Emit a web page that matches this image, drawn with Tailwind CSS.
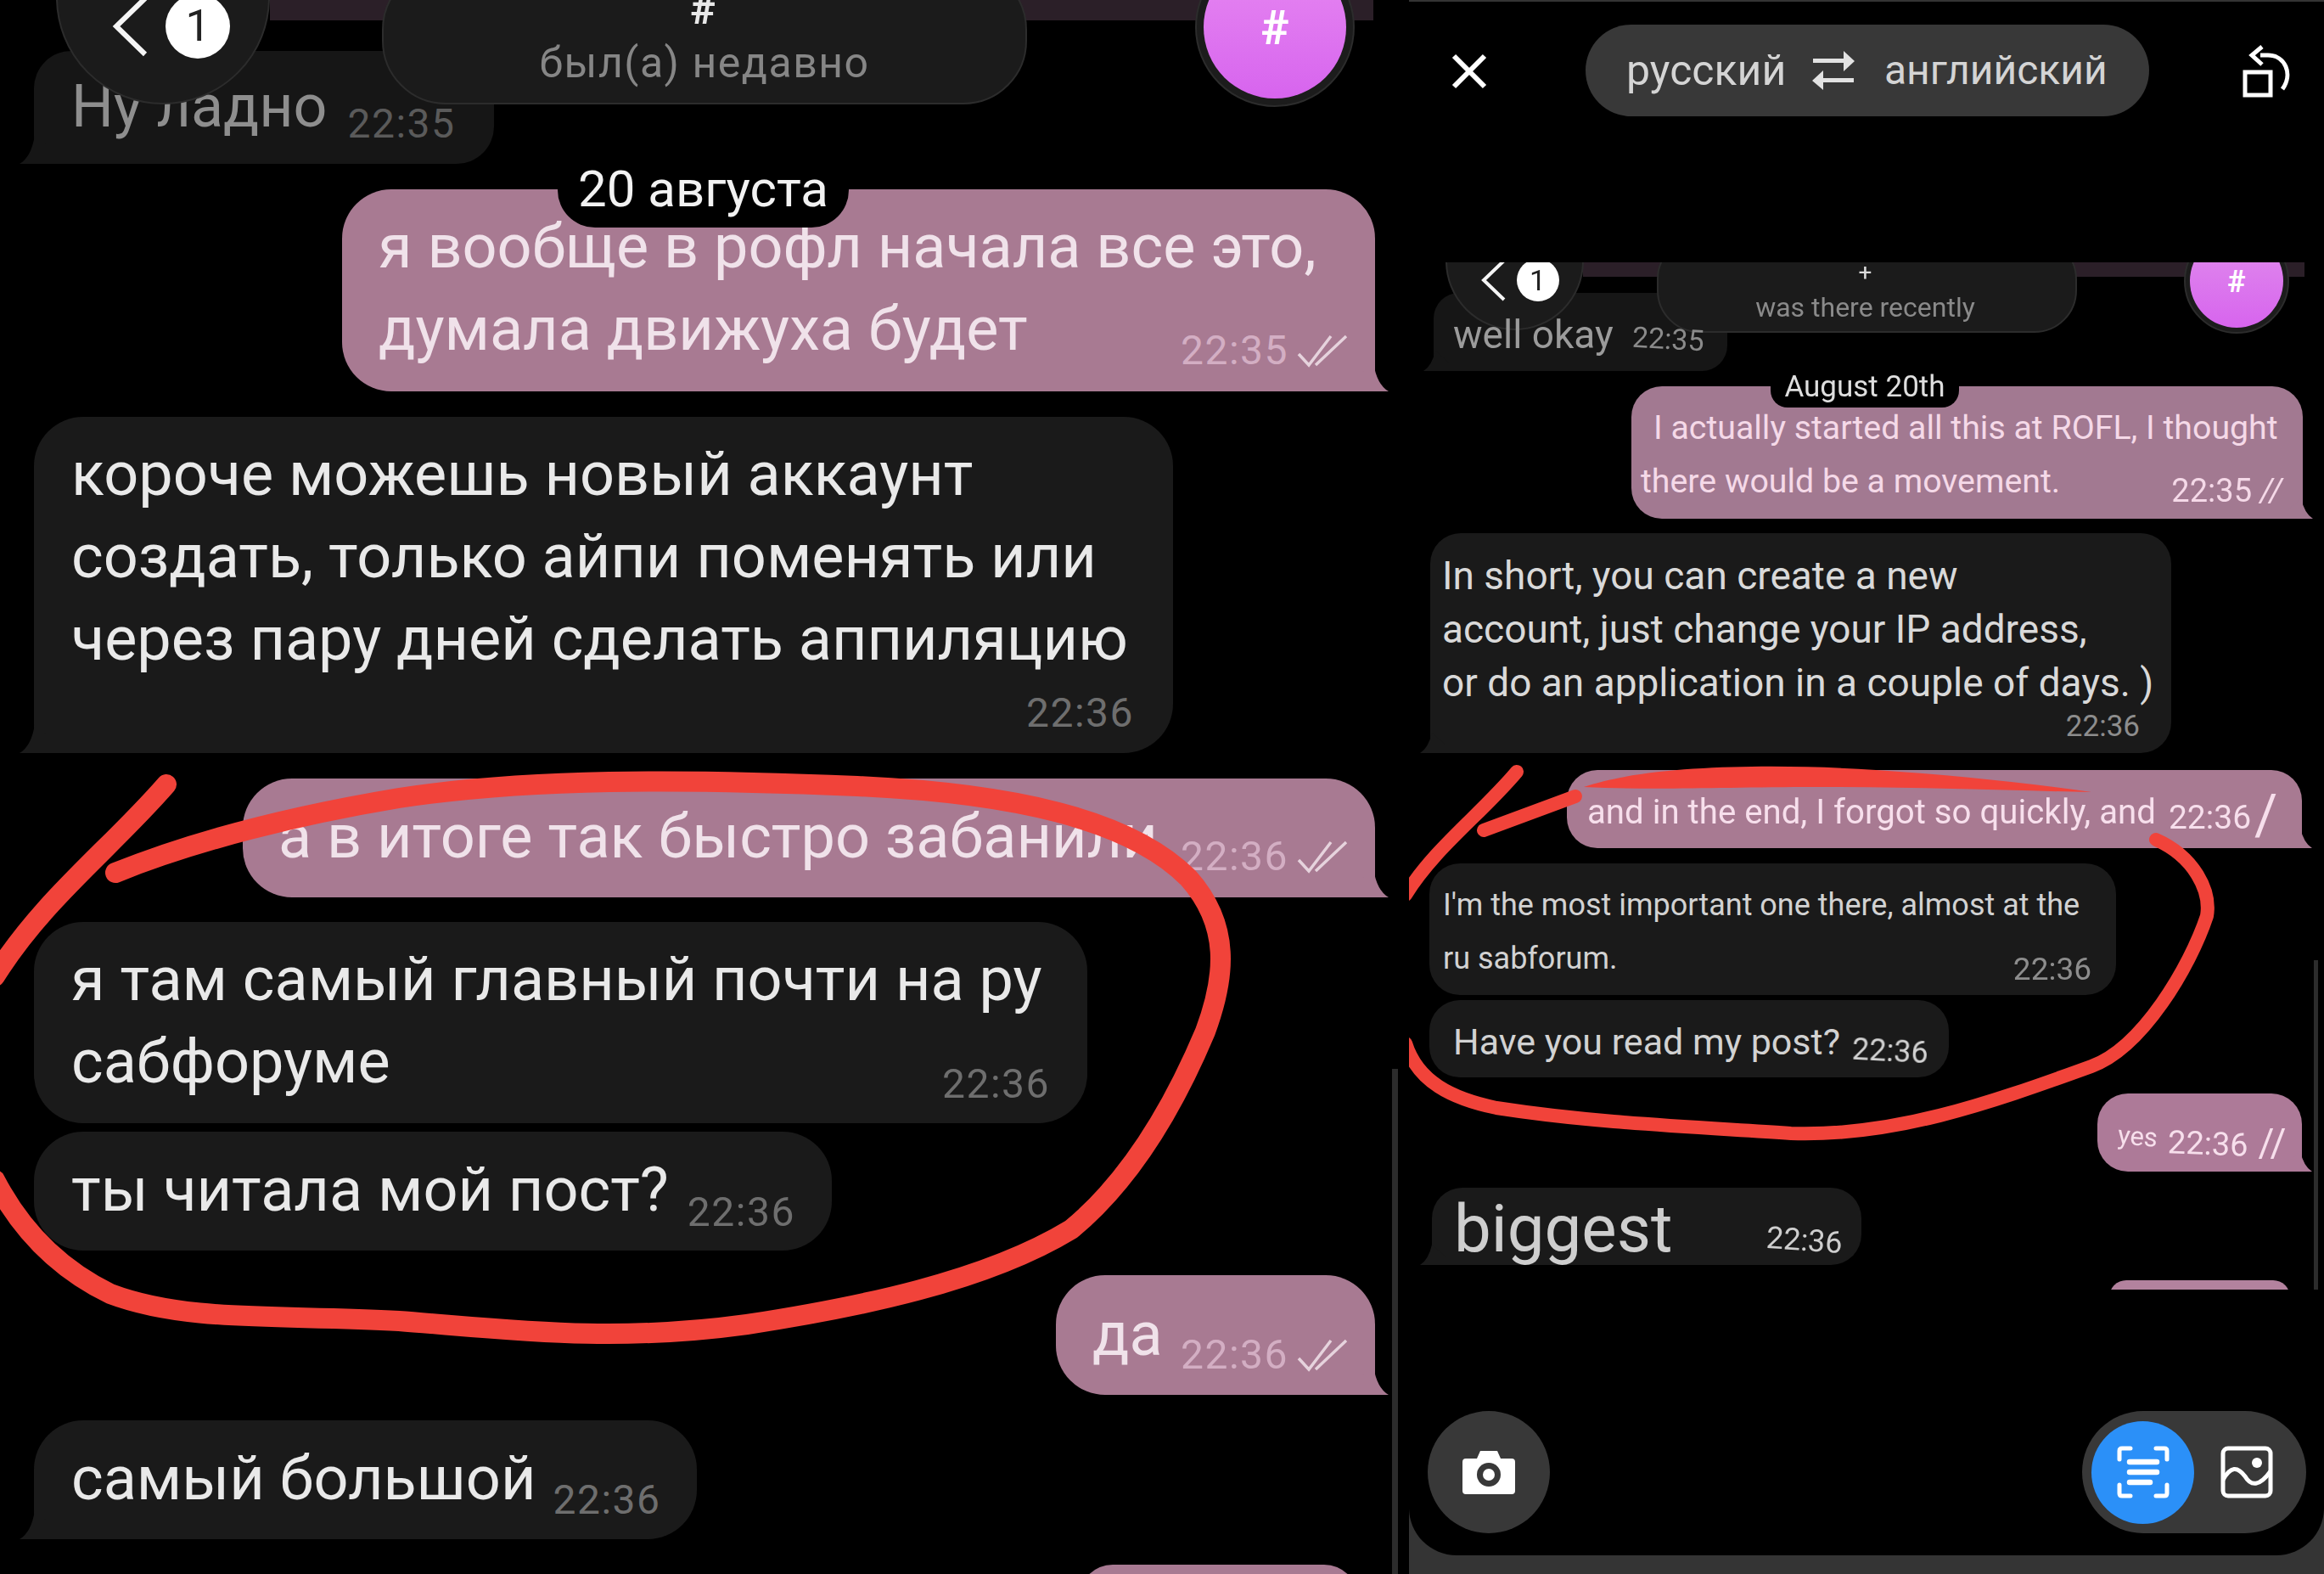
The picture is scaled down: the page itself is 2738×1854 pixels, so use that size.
<!doctype html>
<html lang="ru"><head><meta charset="utf-8">
<script src="https://cdn.jsdelivr.net/npm/@tailwindcss/browser@4"></script>
</head>
<body class="bg-black [font-family:Roboto,sans-serif]">
<main class="flex w-[2738px] h-[1854px] overflow-hidden bg-black">

<!-- LEFT SCREENSHOT -->
<section class="relative w-[1660px] h-[1854px] overflow-hidden flex flex-col blur-[0.7px] [&>*]:shrink-0">
  <div class="relative ml-[40px] mt-[60px] w-[542px] h-[133px] rounded-[44px] rounded-bl-none bg-[#161616] pl-[44px] pt-[27px] flex items-start text-[#8e8e8e]">
    <svg class="absolute left-[-17px] bottom-0" width="40" height="34" viewBox="0 0 40 34"><path d="M0 34 Q14 26 18 0 L40 20 V34Z" fill="#161616"/></svg>
    <span class="text-[70px] leading-[76px]">Ну ладно</span><span class="ml-[24px] mt-[32px] text-[48px] leading-[54px] tracking-[1.5px] text-[#5a5a5a]">22:35</span>
  </div>

  <div class="relative self-end mr-[40px] mt-[30px] w-[1217px] h-[238px] rounded-[58px] rounded-br-none bg-[#a87a92] pl-[43px] pt-[19px] text-[#f0e2ea]">
    <svg class="absolute right-[-16px] bottom-0" width="40" height="34" viewBox="0 0 40 34"><path d="M40 34 Q26 26 22 0 L0 20 V34Z" fill="#a87a92"/></svg>
    <p class="text-[72px] leading-[97px] whitespace-pre-line">я вообще в рофл начала все это,
думала движуха будет</p>
    <div class="absolute right-[30px] bottom-[21px] flex items-center gap-[10px] text-[#d3aec3]"><span class="text-[48px] leading-[54px] tracking-[1.5px]">22:35</span><svg width="62" height="40" viewBox="0 0 62 40" fill="none" stroke="#e6d3dd" stroke-width="3.5"><path d="M2 24 L14 37 L40 3M22 37 L58 3"/></svg></div>
  </div>

  <div class="relative ml-[40px] mt-[30px] w-[1342px] h-[396px] rounded-[58px] rounded-bl-none bg-[#1a1a1a] pl-[44px] pt-[19px] text-[#e9e9e9]">
    <svg class="absolute left-[-17px] bottom-0" width="40" height="34" viewBox="0 0 40 34"><path d="M0 34 Q14 26 18 0 L40 20 V34Z" fill="#1a1a1a"/></svg>
    <p class="text-[72px] leading-[97px] whitespace-pre-line">короче можешь новый аккаунт
создать, только айпи поменять или
через пару дней сделать аппиляцию</p>
    <span class="absolute right-[46px] bottom-[20px] text-[48px] leading-[54px] tracking-[1.5px] text-[#6e6e6e]">22:36</span>
  </div>

  <div class="relative self-end mr-[40px] mt-[30px] w-[1334px] h-[140px] rounded-[58px] rounded-br-none bg-[#a87a92] pl-[42px] pt-[20px] text-[#f0e2ea]">
    <svg class="absolute right-[-16px] bottom-0" width="40" height="34" viewBox="0 0 40 34"><path d="M40 34 Q26 26 22 0 L0 20 V34Z" fill="#a87a92"/></svg>
    <p class="text-[72px] leading-[97px]">а в итоге так быстро забанили</p>
    <div class="absolute right-[30px] bottom-[21px] flex items-center gap-[10px] text-[#d3aec3]"><span class="text-[48px] leading-[54px] tracking-[1.5px]">22:36</span><svg width="62" height="40" viewBox="0 0 62 40" fill="none" stroke="#e6d3dd" stroke-width="3.5"><path d="M2 24 L14 37 L40 3M22 37 L58 3"/></svg></div>
  </div>

  <div class="relative ml-[40px] mt-[29px] w-[1241px] h-[237px] rounded-[58px] bg-[#1a1a1a] pl-[44px] pt-[19px] text-[#e9e9e9]">
    <p class="text-[72px] leading-[97px] whitespace-pre-line">я там самый главный почти на ру
сабфоруме</p>
    <span class="absolute right-[44px] bottom-[19px] text-[48px] leading-[54px] tracking-[1.5px] text-[#6e6e6e]">22:36</span>
  </div>

  <div class="relative ml-[40px] mt-[10px] w-[940px] h-[140px] rounded-[58px] bg-[#1a1a1a] pl-[44px] pt-[20px] text-[#e9e9e9] flex items-start">
    <span class="text-[72px] leading-[97px]">ты читала мой пост?</span><span class="ml-[22px] mt-[48px] text-[48px] leading-[54px] tracking-[1.5px] text-[#6e6e6e]">22:36</span>
  </div>

  <div class="relative self-end mr-[40px] mt-[29px] w-[376px] h-[141px] rounded-[58px] rounded-br-none bg-[#a87a92] pl-[43px] pt-[21px] text-[#f0e2ea]">
    <svg class="absolute right-[-16px] bottom-0" width="40" height="34" viewBox="0 0 40 34"><path d="M40 34 Q26 26 22 0 L0 20 V34Z" fill="#a87a92"/></svg>
    <p class="text-[72px] leading-[97px]">да</p>
    <div class="absolute right-[30px] bottom-[20px] flex items-center gap-[10px] text-[#d3aec3]"><span class="text-[48px] leading-[54px] tracking-[1.5px]">22:36</span><svg width="62" height="40" viewBox="0 0 62 40" fill="none" stroke="#e6d3dd" stroke-width="3.5"><path d="M2 24 L14 37 L40 3M22 37 L58 3"/></svg></div>
  </div>

  <div class="relative ml-[40px] mt-[30px] w-[781px] h-[140px] rounded-[58px] rounded-bl-none bg-[#1a1a1a] pl-[44px] pt-[20px] text-[#e9e9e9] flex items-start">
    <svg class="absolute left-[-17px] bottom-0" width="40" height="34" viewBox="0 0 40 34"><path d="M0 34 Q14 26 18 0 L40 20 V34Z" fill="#1a1a1a"/></svg>
    <span class="text-[72px] leading-[97px]">самый большой</span><span class="ml-[20px] mt-[47px] text-[48px] leading-[54px] tracking-[1.5px] text-[#6e6e6e]">22:36</span>
  </div>

  <div class="self-end mr-[60px] mt-[30px] w-[329px] h-[60px] rounded-t-[40px] bg-[#a87a92]"></div>

  <!-- floating header -->
  <div class="absolute left-0 top-0 w-full h-[126px]">
    <div class="absolute left-[318px] top-0 w-[1300px] h-[24px] bg-[#2b1f28]"></div>
    <div class="absolute left-[66px] top-[-130px] w-[252px] h-[253px] rounded-full bg-[#1b1b1b] border-2 border-[#2c2c2c] flex items-end justify-center pb-[52px] pl-[16px] gap-[16px]">
      <svg class="mb-[2px]" width="50" height="72" viewBox="0 0 50 72" fill="none" stroke="#f5f5f5" stroke-width="6"><path d="M42 3 L8 36 L42 69"/></svg>
      <span class="w-[76px] h-[76px] rounded-full bg-white text-[#222] text-[52px] leading-[76px] text-center">1</span>
    </div>
    <div class="absolute left-[450px] top-[-40px] w-[760px] h-[163px] rounded-[75px] bg-[#1b1b1b] border-2 border-[#2c2c2c] flex flex-col items-center">
      <span class="mt-[24px] mr-[4px] text-[50px] leading-[50px] font-bold text-[#e8e8e8]">#</span>
      <span class="mt-[10px] text-[50px] leading-[56px] tracking-[1.5px] text-[#868686]">был(а) недавно</span>
    </div>
    <div class="absolute left-[1408px] top-[-62px] w-[188px] h-[188px] rounded-full bg-[#1c1c1c] border-2 border-[#2c2c2c] flex items-center justify-center">
      <div class="w-[168px] h-[168px] rounded-full bg-gradient-to-b from-[#e788f1] to-[#d764ee] flex items-end justify-center pb-[55px] text-white text-[56px] leading-[56px] font-bold">#</div>
    </div>
    <div class="absolute left-[657px] top-[178px] w-[343px] h-[90px] rounded-[44px] bg-black text-[#f2f2f2] text-[60px] leading-[90px] text-center">20 августа</div>
  </div>

  <!-- thin scrollbar -->
  <div class="absolute left-[1640px] top-[1259px] w-[7px] h-[595px] bg-[#2c2c2c]"></div>

  <!-- red marker -->
  <svg class="absolute left-0 top-0" width="1660" height="1854" viewBox="0 0 1660 1854" fill="none" stroke="#f1433a" stroke-width="24" stroke-linecap="round" stroke-linejoin="round">
    <path d="M196 924 C130 1000 50 1060 -6 1150"/>
    <path d="M-6 1390 C20 1440 60 1490 130 1524 C220 1558 330 1548 470 1556 C600 1566 720 1582 880 1560 C1010 1540 1160 1510 1262 1448 C1330 1392 1380 1310 1420 1215 C1444 1150 1450 1090 1400 1034 C1330 964 1190 934 1010 926 C800 917 620 917 470 940 C350 960 230 990 136 1028"/>
  </svg>
</section>

<!-- RIGHT PANEL -->
<section class="relative w-[1078px] h-[1854px] bg-[#343434] overflow-hidden">
  <div class="h-[1830px] bg-black rounded-b-[56px] flex flex-col mt-[2px]">
    <header class="flex items-center h-[164px] shrink-0">
      <svg class="ml-[50px]" width="42" height="42" viewBox="0 0 42 42" fill="none" stroke="#fff" stroke-width="6"><path d="M3 3 L39 39M39 3 L3 39"/></svg>
      <div class="ml-[116px] mt-[-2px] w-[664px] h-[108px] rounded-full bg-[#383838] flex items-center text-[#d4d4d4] text-[50px] pl-[48px]">
        <span class="w-[184px]">русский</span>
        <svg class="ml-[34px]" width="52" height="48" viewBox="0 0 52 48" fill="#e2e2e2"><path d="M2 11 H38 V2 L51 14 L38 26 V16 H2Z" transform="translate(0 -1)"/><path d="M50 33 H14 V24 L1 36 L14 47 V38 H50Z"/></svg>
        <span class="ml-[34px] text-[48px]">английский</span>
      </div>
      <svg class="ml-[110px]" width="60" height="62" viewBox="0 0 60 62" fill="none" stroke="#fff" stroke-width="5"><rect x="3" y="32" width="30" height="27"/><path d="M21 12 H30 C50 12 60 34 47 52" /><path d="M23 2 L11 12 L23 23" stroke-width="5"/></svg>
    </header>

    <div class="relative mt-[143px] h-[1210px] shrink-0 overflow-hidden blur-[0.5px] flex flex-col [&>*]:shrink-0">
      <div class="relative ml-[29px] mt-[36px] w-[346px] h-[92px] rounded-[30px] rounded-bl-none bg-[#161616] pl-[23px] pt-[21px] flex items-start text-[#9b9b9b]">
        <svg class="absolute left-[-12px] bottom-0" width="30" height="24" viewBox="0 0 30 24"><path d="M0 24 Q10 18 14 0 L30 14 V24Z" fill="#161616"/></svg>
        <span class="relative z-10 text-[46px] leading-[56px]">well okay</span><span class="relative z-10 ml-[22px] mt-[11px] rotate-[3deg] text-[34px] leading-[44px] text-[#8a8a8a]">22:35</span>
      </div>

      <div class="relative self-end mr-[25px] mt-[18px] w-[791px] h-[156px] rounded-[36px] rounded-br-none bg-[#a27991] text-[#f5d9e8]">
        <svg class="absolute right-[-12px] bottom-0" width="30" height="24" viewBox="0 0 30 24"><path d="M30 24 Q20 18 16 0 L0 14 V24Z" fill="#a27991"/></svg>
        <p class="pl-[26px] pt-[25px] text-[39.3px] leading-[48px] whitespace-nowrap">I actually started all this at ROFL, I thought</p>
        <p class="pl-[11px] mt-[15px] text-[39.3px] leading-[48px] whitespace-nowrap">there would be a movement.</p>
        <span class="absolute right-[60px] bottom-[10px] text-[38px] leading-[46px]">22:35</span>
        <span class="absolute right-[24px] bottom-[10px] text-[38px] leading-[46px] italic">//</span>
      </div>

      <div class="relative ml-[25px] mt-[17px] w-[873px] h-[259px] rounded-[36px] rounded-bl-none bg-[#1a1a1a] pl-[14px] pt-[19px] text-[#d9d9d9]">
        <svg class="absolute left-[-12px] bottom-0" width="30" height="24" viewBox="0 0 30 24"><path d="M0 24 Q10 18 14 0 L30 14 V24Z" fill="#1a1a1a"/></svg>
        <p class="text-[46px] leading-[63px] whitespace-pre-line">In short, you can create a new
account, just change your IP address,
or do an application in a couple of days. )</p>
        <span class="absolute right-[37px] bottom-[11px] text-[35px] leading-[40px] text-[#8d8d8d]">22:36</span>
      </div>

      <div class="relative self-end mr-[26px] mt-[20px] w-[866px] h-[92px] rounded-[36px] rounded-br-none bg-[#a87a92] pl-[24px] pt-[22px] text-[#f7dfec] flex items-start">
        <svg class="absolute right-[-12px] bottom-0" width="30" height="24" viewBox="0 0 30 24"><path d="M30 24 Q20 18 16 0 L0 14 V24Z" fill="#a87a92"/></svg>
        <span class="text-[40.2px] leading-[56px] whitespace-nowrap">and in the end, I forgot so quickly, and</span><span class="ml-[15px] mt-[9px] text-[39px] leading-[50px]">22:36</span><span class="ml-[4px] mt-[1px] text-[66px] leading-[62px]">/</span>
      </div>

      <div class="relative ml-[24px] mt-[18px] w-[809px] h-[155px] rounded-[36px] bg-[#1a1a1a] pl-[16px] pt-[18px] text-[#d2d2d2]">
        <p class="text-[36px] leading-[63px] whitespace-pre-line">I'm the most important one there, almost at the
ru sabforum.</p>
        <span class="absolute right-[29px] bottom-[10px] text-[37px] leading-[40px] text-[#8d8d8d]">22:36</span>
      </div>

      <div class="relative ml-[24px] mt-[6px] w-[612px] h-[91px] rounded-[36px] bg-[#1a1a1a] pl-[28px] pt-[21px] flex items-start text-[#d2d2d2]">
        <span class="text-[43px] leading-[56px]">Have you read my post?</span><span class="ml-[14px] mt-[17px] rotate-[3deg] text-[36px] leading-[44px]">22:36</span>
      </div>

      <div class="relative self-end mr-[26px] mt-[19px] w-[241px] h-[92px] rounded-[36px] rounded-br-none bg-[#ad7a98] pl-[24px] pt-[31px] flex items-start text-[#f7dfec]">
        <svg class="absolute right-[-12px] bottom-0" width="30" height="24" viewBox="0 0 30 24"><path d="M30 24 Q20 18 16 0 L0 14 V24Z" fill="#ad7a98"/></svg>
        <span class="text-[31px] leading-[40px] rotate-[5deg]">yes</span><span class="ml-[12px] mt-[5px] text-[38px] leading-[46px] rotate-[2deg]">22:36</span><span class="ml-[12px] mt-[2px] text-[46px] leading-[50px]">//</span>
      </div>

      <div class="relative ml-[27px] mt-[19px] w-[506px] h-[91px] rounded-[36px] rounded-bl-none bg-[#1a1a1a] pl-[26px] pt-[3px] flex items-start text-[#cecece]">
        <svg class="absolute left-[-14px] bottom-0" width="30" height="24" viewBox="0 0 30 24"><path d="M0 24 Q10 18 14 0 L30 14 V24Z" fill="#1a1a1a"/></svg>
        <span class="text-[78px] leading-[92px] w-[368px]">biggest</span><span class="mt-[37px] rotate-[4deg] text-[36px] leading-[44px]">22:36</span>
      </div>

      <div class="self-end mr-[40px] mt-[18px] w-[213px] h-[20px] rounded-t-[24px] bg-[#b3829e]"></div>

      <!-- mini header -->
      <div class="absolute left-0 top-0 w-full h-[90px]">
        <div class="absolute left-[205px] top-0 w-[850px] h-[17px] bg-[#2b1f28]"></div>
        <div class="absolute left-[43px] top-[-83px] w-[163px] h-[163px] rounded-full bg-[#1b1b1b] border-2 border-[#2c2c2c] flex items-end justify-center pb-[32px] pl-[10px] gap-[10px]">
          <svg width="34" height="50" viewBox="0 0 34 50" fill="none" stroke="#f5f5f5" stroke-width="4"><path d="M29 2 L5 25 L29 48"/></svg>
          <span class="w-[50px] h-[50px] rounded-full bg-white text-[#222] text-[34px] leading-[50px] text-center">1</span>
        </div>
        <div class="absolute left-[292px] top-[-30px] w-[495px] h-[113px] rounded-[50px] bg-[#1b1b1b] border-2 border-[#2c2c2c] flex flex-col items-center">
          <span class="mt-[26px] mr-[4px] text-[28px] leading-[28px] text-[#dcdcdc]">+</span>
          <span class="mt-[8px] mr-[4px] text-[32px] leading-[38px] text-[#8a8a8a]">was there recently</span>
        </div>
        <div class="absolute left-[913px] top-[-40px] w-[124px] h-[124px] rounded-full bg-[#1c1c1c] border-2 border-[#2c2c2c] flex items-center justify-center">
          <div class="w-[110px] h-[110px] rounded-full bg-gradient-to-b from-[#e08bec] to-[#d764ee] flex items-end justify-center pb-[36px] text-white text-[36px] leading-[36px] font-bold">#</div>
        </div>
        <div class="absolute left-[426px] top-[121px] w-[222px] h-[50px] rounded-[20px] bg-black text-[#dedede] text-[35px] leading-[52px] text-center">August 20th</div>
      </div>

      <!-- scrollbar -->
      <div class="absolute left-[1066px] top-[822px] w-[5px] h-[388px] bg-[#2c2c2c]"></div>

      <!-- red marker -->
      <svg class="absolute left-0 top-0" width="1078" height="1210" viewBox="0 0 1078 1210" fill="none" stroke="#f1433a" stroke-width="16" stroke-linecap="round" stroke-linejoin="round">
        <path d="M127 600 C85 650 30 690 -4 745"/>
        <path d="M88 669 L196 629"/>
        <path d="M-4 920 C10 965 50 985 103 996 C220 1014 330 1018 450 1026 C570 1030 680 992 804 947 C864 925 920 830 940 770 C945 740 925 700 880 680"/>
        <path d="M206 618 C280 592 430 590 550 598 C640 604 720 612 804 624 C700 622 600 618 480 618 C370 618 290 622 206 618Z" fill="#f1433a" stroke="none"/>
      </svg>
    </div>
  </div>

  <!-- bottom controls float over the preview -->
  <button class="absolute left-[22px] top-[1662px] w-[144px] h-[144px] rounded-full bg-[#383838] flex items-center justify-center">
    <svg width="62" height="52" viewBox="0 0 62 52"><path d="M4 10 H17 L21 1 H41 L45 10 H58 Q62 10 62 14 V48 Q62 52 58 52 H4 Q0 52 0 48 V14 Q0 10 4 10Z" fill="#fff"/><circle cx="31" cy="29" r="14" fill="#383838"/><circle cx="31" cy="29" r="7" fill="#fff"/></svg>
  </button>
  <div class="absolute left-[793px] top-[1662px] w-[264px] h-[144px] rounded-full bg-[#383838] flex items-center pl-[11px]">
    <div class="w-[121px] h-[121px] rounded-full bg-[#2b90f8] flex items-center justify-center">
      <svg width="62" height="62" viewBox="0 0 62 62" fill="none" stroke="#fff" stroke-width="5" stroke-linecap="round"><path d="M3 16 V6 Q3 3 6 3 H16M46 3 H56 Q59 3 59 6 V16M3 46 V56 Q3 59 6 59 H16M46 59 H56 Q59 59 59 56 V46"/><path d="M15 19 H47M15 31 H47M15 43 H39" stroke-width="6.5"/></svg>
    </div>
    <svg class="ml-[31px]" width="62" height="62" viewBox="0 0 62 62" fill="none" stroke="#fff" stroke-width="5"><rect x="3" y="3" width="56" height="56" rx="6"/><path d="M3 40 C12 24 20 24 29 36 C36 48 46 48 59 30"/><circle cx="43" cy="20" r="6" fill="#fff" stroke="none"/></svg>
  </div>
</section>
</main>
</body></html>
